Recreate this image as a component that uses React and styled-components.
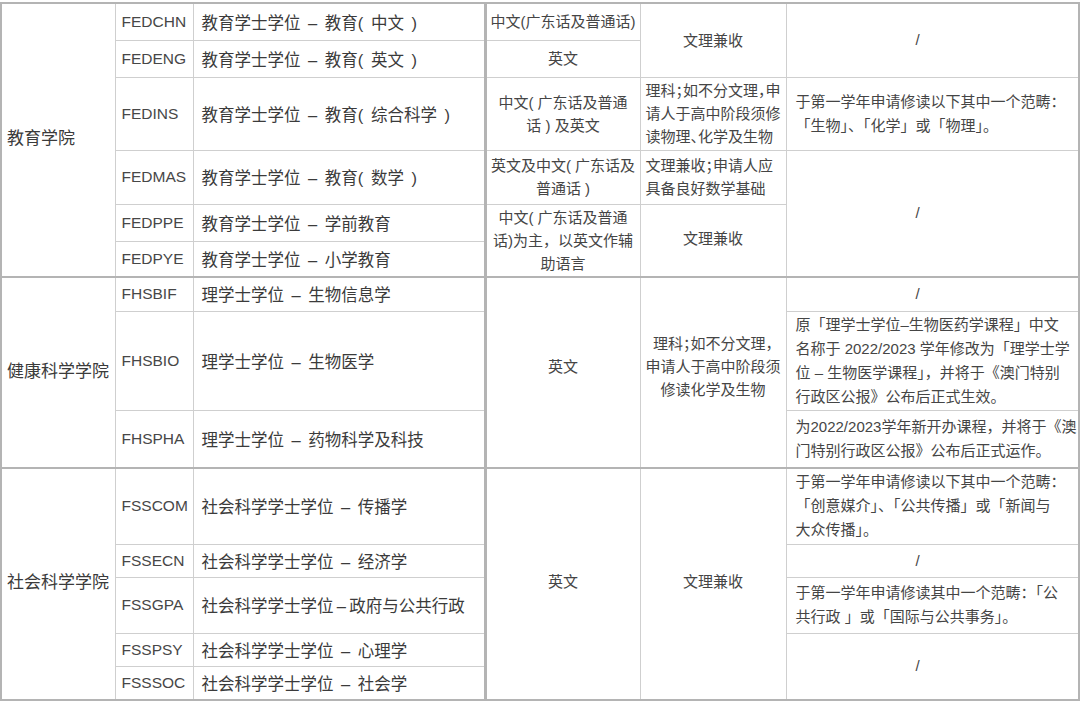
import styled, { createGlobalStyle } from "styled-components";

const GlobalStyle = createGlobalStyle`
  body {
    margin: 0;
    background: #fff;
  }
`;

const Sheet = styled.div`
  padding-top: 2px;
  width: 1080px;
  font-family: "Liberation Sans", "Noto Sans CJK SC", sans-serif;
  color: #3b3b3b;
`;

const Table = styled.table`
  border-collapse: collapse;
  table-layout: fixed;
  width: 1078px;
  border: 2px solid #b4b4b4;
  border-right-width: 3px;
`;

const Row = styled.tr`
  height: ${(p) => p.$h}px;
`;

const Cell = styled.td`
  border: 1px solid #cfcfcf;
  ${(p) => p.$top && "border-top: 2px solid #b4b4b4;"}
  padding: 0;
  vertical-align: middle;
  overflow: hidden;
`;

const Faculty = styled(Cell)`
  padding: 0 0 7px 5px;
  font-family: "Noto Sans CJK SC", sans-serif;
  font-size: 17px;
  white-space: nowrap;
`;

const Code = styled(Cell)`
  padding-left: 6px;
  font-size: 15.5px;
  color: #474747;
`;

const Name = styled(Cell)`
  padding-left: 8px;
  font-size: 16.5px;
  word-spacing: 3px;
  white-space: nowrap;
`;

const Lang = styled(Cell)`
  border-left: 3px solid #b4b4b4;
  padding-bottom: ${(p) => p.$lift || 0}px;
  text-align: center;
  font-size: 15px;
  line-height: 23px;
  color: #454545;
  white-space: nowrap;
`;

const Req = styled(Cell)`
  padding: 0 5px ${(p) => p.$lift || 0}px;
  text-align: ${(p) => (p.$left ? "left" : "center")};
  font-size: 15px;
  line-height: 23px;
  color: #454545;
  white-space: nowrap;
  font-feature-settings: "halt";
`;

const Note = styled(Cell)`
  padding: ${(p) => (p.$center ? "0 38px 0 9px" : "0 9px")};
  text-align: ${(p) => (p.$center ? "center" : "left")};
  font-size: 15px;
  line-height: 24px;
  color: #454545;
  white-space: nowrap;
`;

const Lines = ({ children }) =>
  children.split("\n").map((line, i) => (
    <span key={i}>
      {i > 0 && <br />}
      {line}
    </span>
  ));

export default function App() {
  return (
    <Sheet>
      <GlobalStyle />
      <Table>
        <colgroup>
          <col style={{ width: 114 }} />
          <col style={{ width: 78 }} />
          <col style={{ width: 292 }} />
          <col style={{ width: 155 }} />
          <col style={{ width: 146 }} />
          <col style={{ width: 293 }} />
        </colgroup>
        <tbody>
          <Row $h={37}>
            <Faculty rowSpan={6}>教育学院</Faculty>
            <Code>FEDCHN</Code>
            <Name>教育学士学位 – 教育( 中文 )</Name>
            <Lang>中文(广东话及普通话)</Lang>
            <Req rowSpan={2}>文理兼收</Req>
            <Note rowSpan={2} $center>/</Note>
          </Row>
          <Row $h={37}>
            <Code>FEDENG</Code>
            <Name>教育学士学位 – 教育( 英文 )</Name>
            <Lang>英文</Lang>
          </Row>
          <Row $h={73}>
            <Code>FEDINS</Code>
            <Name>教育学士学位 – 教育( 综合科学 )</Name>
            <Lang>
              <Lines>{"中文( 广东话及普通\n话 ) 及英文"}</Lines>
            </Lang>
            <Req $left>
              <Lines>{"理科；如不分文理，申\n请人于高中阶段须修\n读物理、化学及生物"}</Lines>
            </Req>
            <Note>
              <Lines>{"于第一学年申请修读以下其中一个范畴：\n「生物」、「化学」或「物理」。"}</Lines>
            </Note>
          </Row>
          <Row $h={54}>
            <Code>FEDMAS</Code>
            <Name>教育学士学位 – 教育( 数学 )</Name>
            <Lang>
              <Lines>{"英文及中文( 广东话及\n普通话 )"}</Lines>
            </Lang>
            <Req $left>
              <Lines>{"文理兼收；申请人应\n具备良好数学基础"}</Lines>
            </Req>
            <Note rowSpan={3} $center>/</Note>
          </Row>
          <Row $h={37}>
            <Code>FEDPPE</Code>
            <Name>教育学士学位 – 学前教育</Name>
            <Lang rowSpan={2}>
              <Lines>{"中文( 广东话及普通\n话)为主，以英文作辅\n助语言"}</Lines>
            </Lang>
            <Req rowSpan={2} $lift={4}>文理兼收</Req>
          </Row>
          <Row $h={36}>
            <Code>FEDPYE</Code>
            <Name>教育学士学位 – 小学教育</Name>
          </Row>

          <Row $h={34}>
            <Faculty rowSpan={3} $top>健康科学学院</Faculty>
            <Code $top>FHSBIF</Code>
            <Name $top>理学士学位 – 生物信息学</Name>
            <Lang rowSpan={3} $top $lift={12}>英文</Lang>
            <Req rowSpan={3} $top $lift={12}>
              <Lines>{"理科；如不分文理，\n申请人于高中阶段须\n修读化学及生物"}</Lines>
            </Req>
            <Note $top $center>/</Note>
          </Row>
          <Row $h={99}>
            <Code>FHSBIO</Code>
            <Name>理学士学位 – 生物医学</Name>
            <Note>
              <Lines>
                {"原「理学士学位–生物医药学课程」中文\n名称于 2022/2023 学年修改为「理学士学\n位 – 生物医学课程」，并将于《澳门特别\n行政区公报》公布后正式生效。"}
              </Lines>
            </Note>
          </Row>
          <Row $h={58}>
            <Code>FHSPHA</Code>
            <Name>理学士学位 – 药物科学及科技</Name>
            <Note>
              <Lines>{"为2022/2023学年新开办课程，并将于《澳\n门特别行政区公报》公布后正式运作。"}</Lines>
            </Note>
          </Row>

          <Row $h={76}>
            <Faculty rowSpan={5} $top>社会科学学院</Faculty>
            <Code $top>FSSCOM</Code>
            <Name $top>社会科学学士学位 – 传播学</Name>
            <Lang rowSpan={5} $top $lift={6}>英文</Lang>
            <Req rowSpan={5} $top $lift={6}>文理兼收</Req>
            <Note $top>
              <Lines>{"于第一学年申请修读以下其中一个范畴：\n「创意媒介」、「公共传播」或「新闻与\n大众传播」。"}</Lines>
            </Note>
          </Row>
          <Row $h={33}>
            <Code>FSSECN</Code>
            <Name>社会科学学士学位 – 经济学</Name>
            <Note $center>/</Note>
          </Row>
          <Row $h={56}>
            <Code>FSSGPA</Code>
            <Name>社会科学学士学位{"\u2009–\u2009"}政府与公共行政</Name>
            <Note>
              <Lines>{"于第一学年申请修读其中一个范畴：「公\n共行政 」或「国际与公共事务」。"}</Lines>
            </Note>
          </Row>
          <Row $h={33}>
            <Code>FSSPSY</Code>
            <Name>社会科学学士学位 – 心理学</Name>
            <Note rowSpan={2} $center>/</Note>
          </Row>
          <Row $h={34}>
            <Code>FSSSOC</Code>
            <Name>社会科学学士学位 – 社会学</Name>
          </Row>
        </tbody>
      </Table>
    </Sheet>
  );
}
